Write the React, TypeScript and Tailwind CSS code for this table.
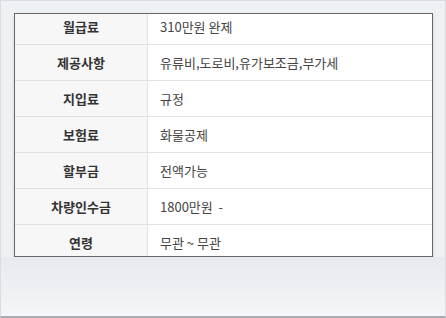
const rows: [string, string][] = [
  ["월급료", "310만원 완제"],
  ["제공사항", "유류비,도로비,유가보조금,부가세"],
  ["지입료", "규정"],
  ["보험료", "화물공제"],
  ["할부금", "전액가능"],
  ["차량인수금", "1800만원  -"],
  ["연령", "무관 ~ 무관"],
];

const font = { fontFamily: '"Noto Sans CJK KR", "Liberation Sans", sans-serif' };

export default function App() {
  return (
    <div
      className="w-[446px] h-[318px] bg-[#eef1f4] border border-[#d9dde2] border-b-2 border-b-[#a9adb2] overflow-hidden"
      style={font}
    >
      <div className="ml-[13px] mt-[12px] w-[419px] h-[244px] overflow-hidden border border-[#666] bg-white shadow-[0_2px_3px_rgba(0,0,0,0.12)]">
        <div className="-mt-[5px]">
          {rows.map(([label, value], i) => (
            <div
              key={label}
              className={`flex h-[36px] ${i < rows.length - 1 ? "border-b border-[#e2e2e2]" : ""}`}
            >
              <div className="w-[133px] shrink-0 bg-[#f7f7f7] border-r border-[#e2e2e2] flex items-center justify-center text-[13px] font-semibold text-[#333]">
                {label}
              </div>
              <div className="flex-1 flex items-center pl-[12px] text-[13px] text-[#444] whitespace-pre">
                {value}
              </div>
            </div>
          ))}
        </div>
      </div>
      <div className="h-[60px] bg-gradient-to-b from-[#e6eaee] to-[#f4f6f8]" />
    </div>
  );
}
